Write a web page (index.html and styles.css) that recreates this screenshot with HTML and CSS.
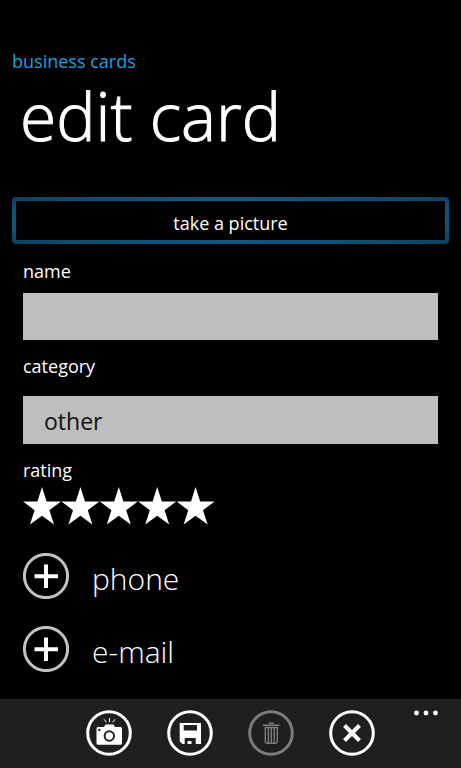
FILE: index.html
```html
<!DOCTYPE html>
<html lang="en">
<head>
<meta charset="utf-8">
<meta name="viewport" content="width=device-width, initial-scale=1">
<title>edit card</title>
<link rel="stylesheet" href="styles.css">
</head>
<body>
<div class="page">
  <header class="header">
    <p class="app-name">business cards</p>
    <h1 class="title">edit card</h1>
  </header>
  <main class="form">
    <button class="picture-button" type="button">take a picture</button>
    <label class="label" for="name">name</label>
    <input class="field name-field" id="name" type="text">
    <label class="label" for="category">category</label>
    <select class="field category-field" id="category"><option>other</option></select>
    <p class="label">rating</p>
    <div class="rating" role="img" aria-label="5 stars">
      <svg class="stars" viewBox="0 0 192 38">
        <defs><path id="star" d="M19 0 23.6 14.5H38L26.4 23.2 31 37.5 19 28.7 7 37.5 11.6 23.2 0 14.5H14.4Z"/></defs>
        <use href="#star"/><use href="#star" x="38.4"/><use href="#star" x="76.8"/><use href="#star" x="115.2"/><use href="#star" x="153.6"/>
      </svg>
    </div>
    <div class="add-list">
      <button class="add" type="button">
        <svg class="add-icon" viewBox="0 0 46 46"><circle cx="23" cy="23" r="21.6"/><path d="M23 11.5V35M11.5 23.2H35"/></svg>
        <span>phone</span>
      </button>
      <button class="add" type="button">
        <svg class="add-icon" viewBox="0 0 46 46"><circle cx="23" cy="23" r="21.6"/><path d="M23 11.5V35M11.5 23.2H35"/></svg>
        <span>e-mail</span>
      </button>
    </div>
  </main>
  <footer class="app-bar">
    <div class="actions">
      <button class="action" type="button" aria-label="camera">
        <svg viewBox="0 0 46 46"><circle class="ring" cx="23" cy="23" r="21.3"/>
          <path class="solid" fill-rule="evenodd" d="M12 17H18L19.5 14.5H27.5L29 17H34.5Q36 17 36 18.5V33.2Q36 34.7 34.5 34.7H12Q10.5 34.7 10.5 33.2V18.5Q10.5 17 12 17ZM13.3 18.8A1.2 1.2 0 1 0 13.3 21.2 1.2 1.2 0 1 0 13.3 18.8ZM23.3 20.3A5.7 5.7 0 1 0 23.3 31.7 5.7 5.7 0 1 0 23.3 20.3ZM23.3 22.3A3.7 3.7 0 1 1 23.3 29.7 3.7 3.7 0 1 1 23.3 22.3Z"/>
          <path class="flash" d="M23.5 8V12M18 9.3 20.5 12.3M29 9.3 26.5 12.3"/></svg>
      </button>
      <button class="action" type="button" aria-label="save">
        <svg viewBox="0 0 46 46"><circle class="ring" cx="23" cy="23" r="21.3"/>
          <path class="solid" fill-rule="evenodd" d="M12.7 13H34V34H15.5L12.7 31.5ZM16.7 15V20.6H30V15ZM17.7 28V34H28.7V28Z"/>
          <path class="solid" d="M20.5 31H24.5V34H20.5Z"/></svg>
      </button>
      <button class="action" type="button" aria-label="delete" disabled>
        <svg viewBox="0 0 46 46"><circle class="ring" cx="23" cy="23" r="21.3"/>
          <path class="bin" d="M15 15.3H31.5M20.7 13.3H25.8M17.3 17.5V31.5Q17.3 33.2 19 33.2H27.5Q29.3 33.2 29.3 31.5V17.5ZM20.4 18V33M23.3 18V33M26.2 18V33"/></svg>
      </button>
      <button class="action" type="button" aria-label="cancel">
        <svg viewBox="0 0 46 46"><circle class="ring" cx="23" cy="23" r="21.3"/>
          <path class="cross" d="M15.5 15.5 30.5 30.5M30.5 15.5 15.5 30.5"/></svg>
      </button>
    </div>
    <button class="more" type="button" aria-label="more">
      <svg viewBox="0 0 24 6"><circle cx="2.5" cy="3" r="2.4"/><circle cx="12" cy="3" r="2.4"/><circle cx="21.5" cy="3" r="2.4"/></svg>
    </button>
  </footer>
</div>
</body>
</html>
```
FILE: styles.css
```css
* { box-sizing: border-box; }
body {
  margin: 0;
  background: #000;
  color: #fff;
  font-family: "Open Sans", "Noto Sans", sans-serif;
  font-size: 18px;
  line-height: 24px;
}
button, input, select { font: inherit; color: inherit; margin: 0; border: 0; border-radius: 0; background: none; padding: 0; }
h1, p { margin: 0; }
svg { display: block; }
.page { min-height: 100vh; display: flex; flex-direction: column; }
.header { padding: 49px 12px 0; }
.app-name { color: #1ba1e2; }
.title { margin: 2px 8px 0; font-size: 66px; line-height: 80px; font-weight: 300; -webkit-text-stroke: 1px #fff; }
.form { flex: 1; display: flex; flex-direction: column; padding: 42px 23px 24px; }
.picture-button {
  height: 47px;
  margin: 0 -11px 15px;
  border: 4px solid transparent;
  border-radius: 4px;
  padding-top: 4px;
  background:
    linear-gradient(#000, #000) padding-box,
    radial-gradient(ellipse at center, #0f608c 50%, #0c4160 100%) border-box;
}
.label { display: block; }
.field { width: 100%; background: #bebebe; color: #111; appearance: none; }
.name-field { height: 47px; margin: 10px 0 14px; padding: 0 21px; font-size: 24px; }
.category-field { height: 48px; margin: 18px 0 14px; padding: 2px 21px 0; font-size: 23px; }
.stars { width: 192px; height: 38px; margin-top: 5px; fill: #fff; }
.add-list { display: flex; flex-direction: column; gap: 27px; margin-top: 28px; }
.add { display: flex; align-items: center; gap: 23px; height: 46px; font-size: 30px; font-weight: 300; }
.add span { padding-top: 5px; }
.add-icon { width: 46px; height: 46px; fill: none; stroke: #fff; stroke-width: 4; }
.add-icon circle { stroke: #c2c2c2; stroke-width: 3; }
.app-bar {
  display: grid;
  grid-template-columns: 1fr auto 1fr;
  background: #1f1f1f;
  padding: 11px 23px 12px;
}
.actions { grid-column: 2; display: flex; gap: 35px; }
.action { width: 46px; height: 46px; color: #fff; }
.action:disabled { color: #7c7c7c; }
.ring { fill: none; stroke: currentColor; stroke-width: 3; }
.solid { fill: currentColor; }
.flash { fill: none; stroke: currentColor; stroke-width: 1; }
.bin { fill: none; stroke: currentColor; stroke-width: 1.4; }
.cross { fill: none; stroke: currentColor; stroke-width: 4; }
.more { align-self: start; justify-self: end; }
.more svg { width: 24px; height: 6px; fill: #fff; }
```
